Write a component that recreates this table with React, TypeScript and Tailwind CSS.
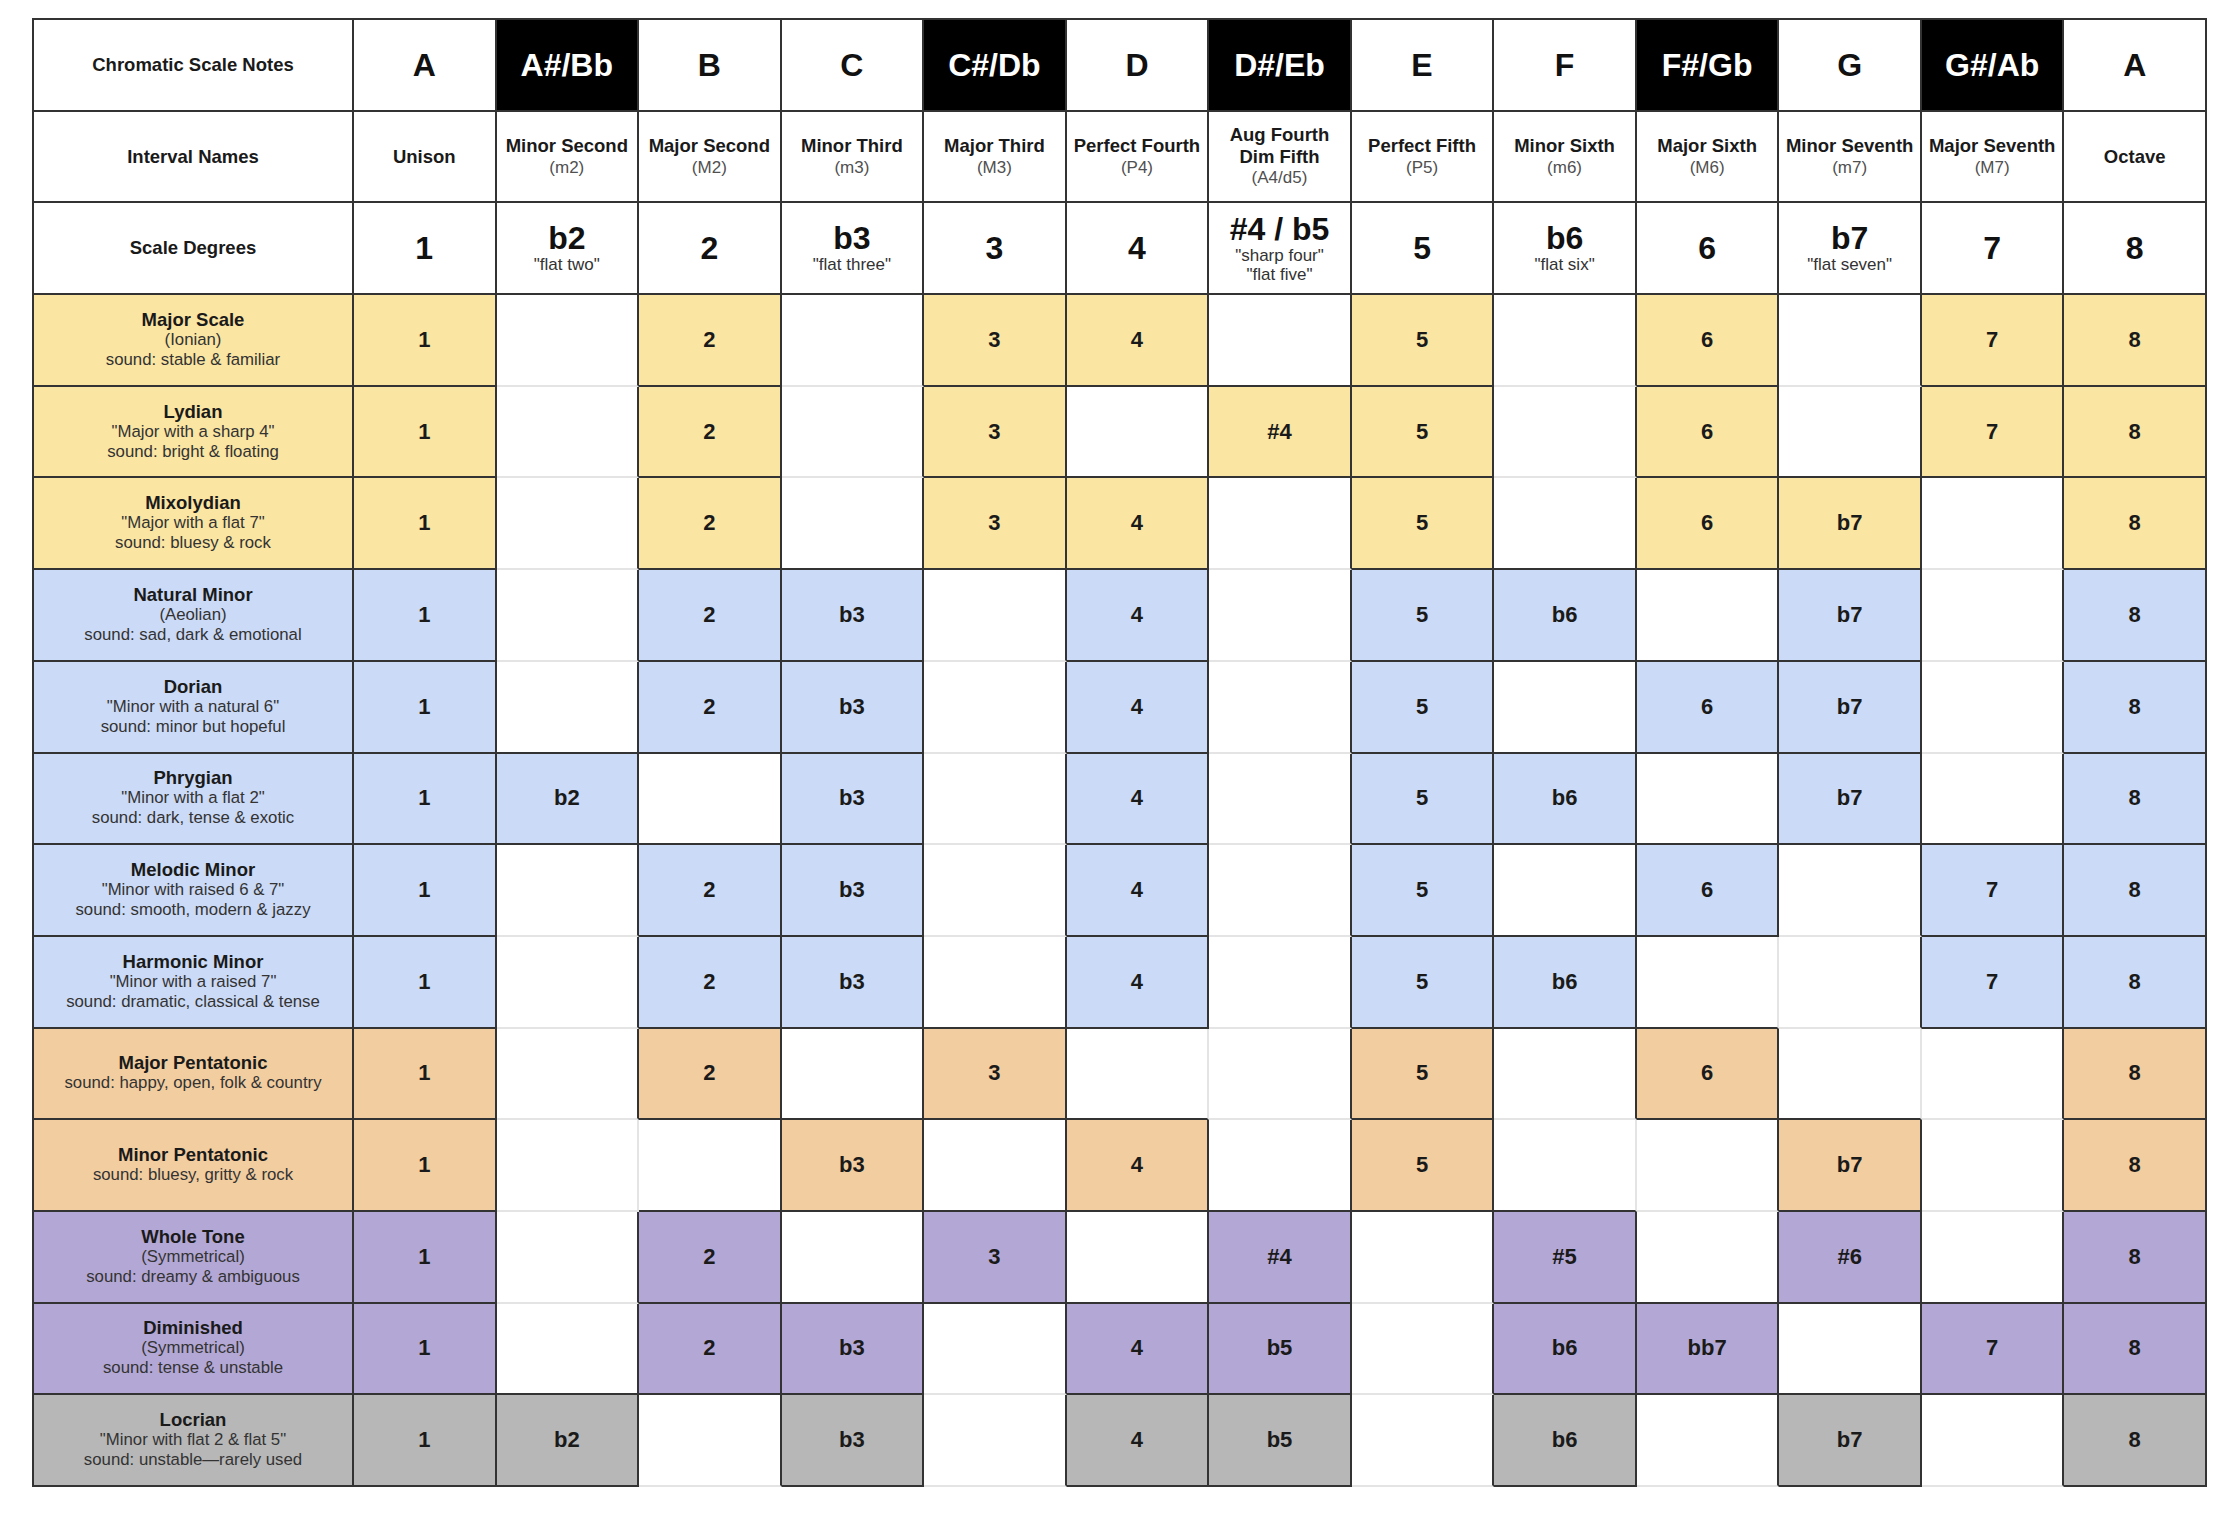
import React from "react";

type Cell = {
  bg: string;
  dark: boolean;
  content: React.ReactNode;
};

const notes = ["A", "A#/Bb", "B", "C", "C#/Db", "D", "D#/Eb", "E", "F", "F#/Gb", "G", "G#/Ab", "A"];
const sharps = [1, 4, 6, 9, 11];

const intervals: [string[], string | null][] = [
  [["Unison"], null],
  [["Minor Second"], "(m2)"],
  [["Major Second"], "(M2)"],
  [["Minor Third"], "(m3)"],
  [["Major Third"], "(M3)"],
  [["Perfect Fourth"], "(P4)"],
  [["Aug Fourth", "Dim Fifth"], "(A4/d5)"],
  [["Perfect Fifth"], "(P5)"],
  [["Minor Sixth"], "(m6)"],
  [["Major Sixth"], "(M6)"],
  [["Minor Seventh"], "(m7)"],
  [["Major Seventh"], "(M7)"],
  [["Octave"], null],
];

const degrees: [string, string[]][] = [
  ["1", []],
  ["b2", ['"flat two"']],
  ["2", []],
  ["b3", ['"flat three"']],
  ["3", []],
  ["4", []],
  ["#4 / b5", ['"sharp four"', '"flat five"']],
  ["5", []],
  ["b6", ['"flat six"']],
  ["6", []],
  ["b7", ['"flat seven"']],
  ["7", []],
  ["8", []],
];

const YELLOW = "bg-[#fae5a2]";
const BLUE = "bg-[#cbdaf6]";
const ORANGE = "bg-[#f2cda0]";
const PURPLE = "bg-[#b3a8d5]";
const GRAY = "bg-[#b7b7b7]";

const scales: { name: string; lines: string[]; bg: string; values: string }[] = [
  { name: "Major Scale", lines: ["(Ionian)", "sound: stable & familiar"], bg: YELLOW, values: "1,,2,,3,4,,5,,6,,7,8" },
  { name: "Lydian", lines: ['"Major with a sharp 4"', "sound: bright & floating"], bg: YELLOW, values: "1,,2,,3,,#4,5,,6,,7,8" },
  { name: "Mixolydian", lines: ['"Major with a flat 7"', "sound: bluesy & rock"], bg: YELLOW, values: "1,,2,,3,4,,5,,6,b7,,8" },
  { name: "Natural Minor", lines: ["(Aeolian)", "sound: sad, dark & emotional"], bg: BLUE, values: "1,,2,b3,,4,,5,b6,,b7,,8" },
  { name: "Dorian", lines: ['"Minor with a natural 6"', "sound: minor but hopeful"], bg: BLUE, values: "1,,2,b3,,4,,5,,6,b7,,8" },
  { name: "Phrygian", lines: ['"Minor with a flat 2"', "sound: dark, tense & exotic"], bg: BLUE, values: "1,b2,,b3,,4,,5,b6,,b7,,8" },
  { name: "Melodic Minor", lines: ['"Minor with raised 6 & 7"', "sound: smooth, modern & jazzy"], bg: BLUE, values: "1,,2,b3,,4,,5,,6,,7,8" },
  { name: "Harmonic Minor", lines: ['"Minor with a raised 7"', "sound: dramatic, classical & tense"], bg: BLUE, values: "1,,2,b3,,4,,5,b6,,,7,8" },
  { name: "Major Pentatonic", lines: ["sound: happy, open, folk & country"], bg: ORANGE, values: "1,,2,,3,,,5,,6,,,8" },
  { name: "Minor Pentatonic", lines: ["sound: bluesy, gritty & rock"], bg: ORANGE, values: "1,,,b3,,4,,5,,,b7,,8" },
  { name: "Whole Tone", lines: ["(Symmetrical)", "sound: dreamy & ambiguous"], bg: PURPLE, values: "1,,2,,3,,#4,,#5,,#6,,8" },
  { name: "Diminished", lines: ["(Symmetrical)", "sound: tense & unstable"], bg: PURPLE, values: "1,,2,b3,,4,b5,,b6,bb7,,7,8" },
  { name: "Locrian", lines: ['"Minor with flat 2 & flat 5"', "sound: unstable\u2014rarely used"], bg: GRAY, values: "1,b2,,b3,,4,b5,,b6,,b7,,8" },
];

function buildMatrix(): Cell[][] {
  const rows: Cell[][] = [];

  // Row 0: chromatic notes
  rows.push([
    {
      bg: "bg-white",
      dark: true,
      content: <span className="text-[18.5px] font-bold leading-[22px] text-[#1a1a1a]">Chromatic Scale Notes</span>,
    },
    ...notes.map((n, i) => {
      const black = sharps.includes(i);
      return {
        bg: black ? "bg-black" : "bg-white",
        dark: true,
        content: (
          <span
            className={
              black
                ? "whitespace-nowrap text-[32px] font-bold leading-[36px] text-white"
                : "whitespace-nowrap text-[32px] font-bold leading-[36px] text-[#111]"
            }
          >
            {n}
          </span>
        ),
      };
    }),
  ]);

  // Row 1: interval names
  rows.push([
    {
      bg: "bg-white",
      dark: true,
      content: <span className="text-[18.5px] font-bold leading-[22px] text-[#1a1a1a]">Interval Names</span>,
    },
    ...intervals.map(([bold, sub]) => ({
      bg: "bg-white",
      dark: true,
      content: (
        <>
          {bold.map((b) => (
            <span key={b} className="block whitespace-nowrap text-[18.5px] font-bold leading-[21.5px] text-[#1a1a1a]">
              {b}
            </span>
          ))}
          {sub && <span className="block text-[17px] leading-[21.5px] text-[#505050]">{sub}</span>}
        </>
      ),
    })),
  ]);

  // Row 2: scale degrees
  rows.push([
    {
      bg: "bg-white",
      dark: true,
      content: <span className="text-[18.5px] font-bold leading-[22px] text-[#1a1a1a]">Scale Degrees</span>,
    },
    ...degrees.map(([big, subs]) => ({
      bg: "bg-white",
      dark: true,
      content: (
        <>
          <span
            className={
              subs.length
                ? "block whitespace-nowrap text-[32px] font-bold leading-[33px] text-[#111]"
                : "block text-[32px] font-bold leading-[36px] text-[#111]"
            }
          >
            {big}
          </span>
          {subs.map((s) => (
            <span key={s} className="block whitespace-nowrap text-[17px] leading-[19px] text-[#333]">
              {s}
            </span>
          ))}
        </>
      ),
    })),
  ]);

  for (const s of scales) {
    const vals = s.values.split(",");
    rows.push([
      {
        bg: s.bg,
        dark: true,
        content: (
          <>
            <span className="block text-[18.5px] font-bold leading-[20px] text-[#1a1a1a]">{s.name}</span>
            {s.lines.map((l) => (
              <span key={l} className="block whitespace-nowrap text-[16.8px] leading-[20px] text-[#333]">
                {l}
              </span>
            ))}
          </>
        ),
      },
      ...vals.map((v) => ({
        bg: v ? s.bg : "bg-white",
        dark: !!v,
        content: v ? <span className="text-[22px] font-bold leading-[26px] text-[#1a1a1a]">{v}</span> : null,
      })),
    ]);
  }
  return rows;
}

export default function App() {
  const m = buildMatrix();
  const nRows = m.length;
  const nCols = m[0].length;

  return (
    <div className="w-[2230px] h-[1514px] bg-white pt-[18px] pl-[32px] font-['Liberation_Sans',Arial,sans-serif]">
      <div className="grid w-[2175px] h-[1469px] grid-cols-[320px_repeat(13,minmax(0,1fr))] grid-rows-[repeat(16,minmax(0,1fr))] border-l-2 border-t-2 border-[#333]">
        {m.map((row, r) =>
          row.map((cell, c) => {
            const right = c === nCols - 1 ? cell.dark : cell.dark || m[r][c + 1].dark;
            const bottom = r === nRows - 1 ? cell.dark : cell.dark || m[r + 1][c].dark;
            const cls = [
              "flex flex-col items-center justify-center text-center border-r-2 border-b-2 overflow-hidden",
              cell.bg,
              right ? "border-r-[#333]" : "border-r-[#e4e4e4]",
              bottom ? "border-b-[#333]" : "border-b-[#e4e4e4]",
            ].join(" ");
            return (
              <div key={`${r}-${c}`} className={cls}>
                {cell.content}
              </div>
            );
          })
        )}
      </div>
    </div>
  );
}
